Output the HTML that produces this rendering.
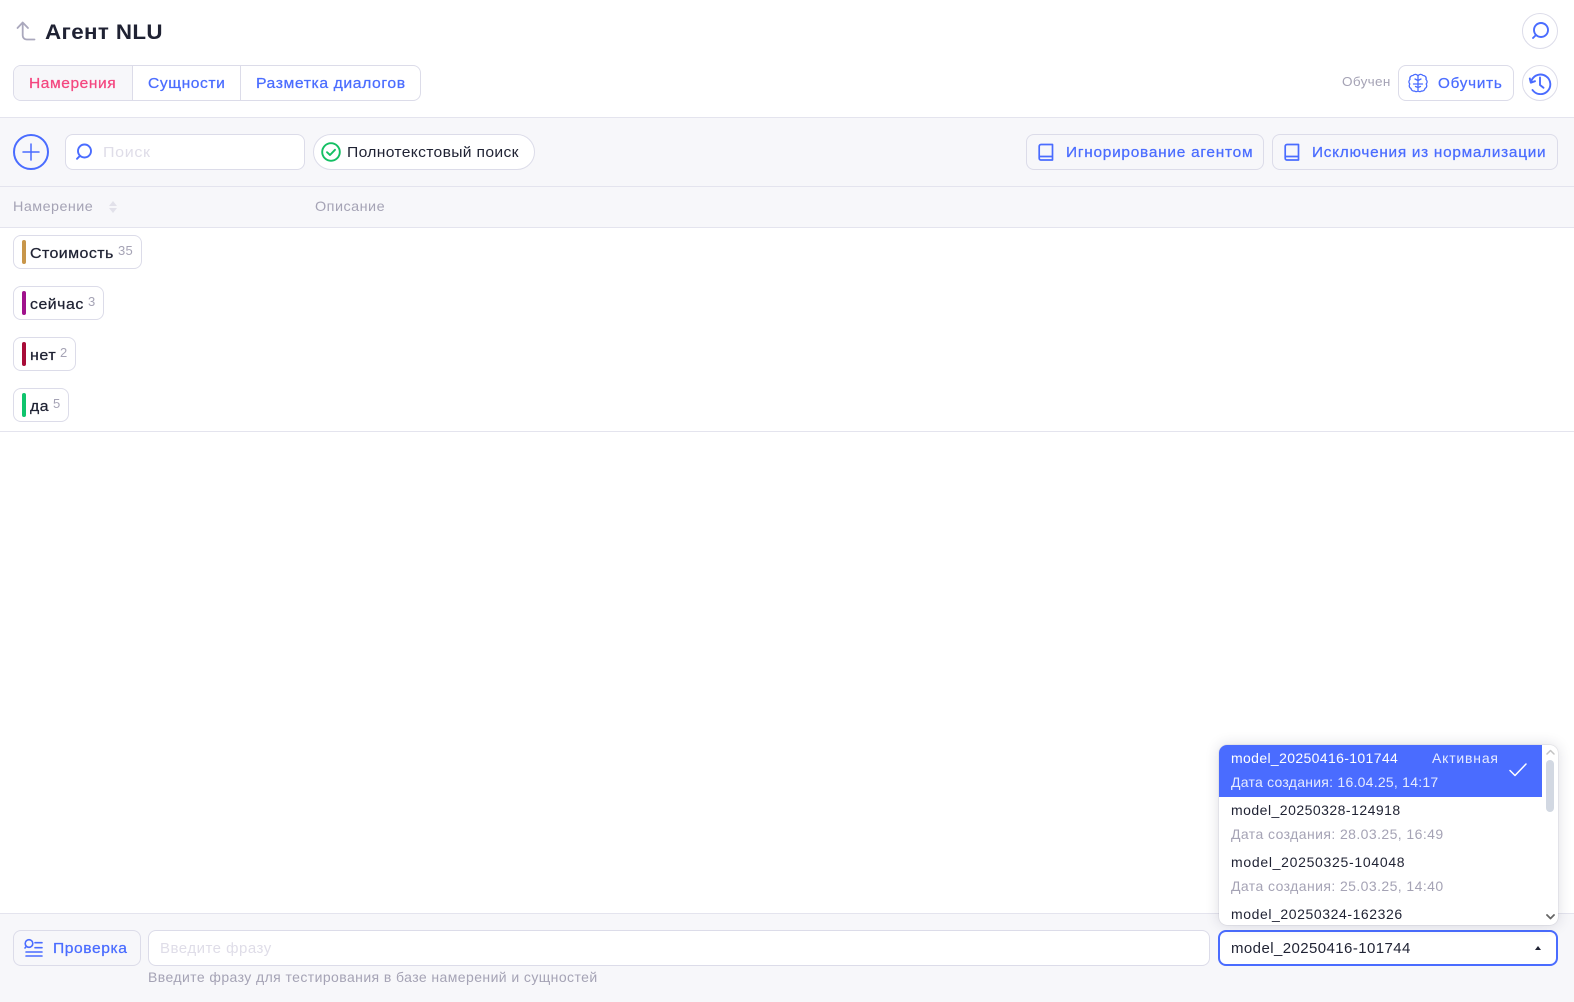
<!DOCTYPE html>
<html lang="ru"><head><meta charset="utf-8"><title>Агент NLU</title>
<style>
*{box-sizing:border-box}
html,body{margin:0;padding:0}
body{width:1574px;height:1002px;position:relative;overflow:hidden;background:#fff;font-family:"Liberation Sans",sans-serif;color:#1f2233}
.a{position:absolute}
.t{position:absolute;white-space:nowrap;line-height:20px;height:20px;transform-origin:left center}
.b{-webkit-text-stroke:.25px currentColor}
.box{position:absolute;border:1px solid #dcdce9;border-radius:8px;background:#fff}
.blue{color:#4a6cff}
svg{position:absolute;fill:none;stroke:#4a6cff;stroke-width:1.7;stroke-linecap:round;stroke-linejoin:round}
.chip{position:absolute;left:13px;height:34px;border:1px solid #dcdce9;border-radius:8px;background:#fff}
.chip i{position:absolute;left:8px;top:4px;width:4px;height:24px;border-radius:2px}
</style></head><body>

<svg style="left:15px;top:20px;stroke:#aaa8bd;stroke-width:1.8" width="24" height="24" viewBox="0 0 24 24"><path d="M2.500 8l5.200-5.500L13 8M7.700 2.500V15.500a4 4 0 0 0 4 4H19.500"/></svg>
<div class="t" style="left:45px;top:22px;font-size:21px;font-weight:700;letter-spacing:.35px;line-height:22px;height:22px;transform:scaleX(1.065)">Агент NLU</div>

<div class="a" style="left:1522px;top:13px;width:36px;height:36px;border:1px solid #dcdce9;border-radius:50%"></div>
<svg style="left:1530px;top:20px;stroke-width:1.9" width="20" height="20" viewBox="0 0 20 20"><circle cx="11" cy="10" r="7"/><path d="M6 15l-3 3"/></svg>

<div class="box" style="left:13px;top:65px;width:408px;height:36px"></div>
<div class="a" style="left:14px;top:66px;width:119px;height:34px;background:#f7f7fa;border-right:1px solid #dcdce9;border-radius:7px 0 0 7px"></div>
<div class="a" style="left:240px;top:66px;width:1px;height:34px;background:#dcdce9"></div>
<div class="t b" style="left:29px;top:74px;font-size:15px;letter-spacing:.55px;color:#f4467f;transform:scaleX(1.036)">Намерения</div>
<div class="t blue b" style="left:148px;top:74px;font-size:15px;letter-spacing:.55px;transform:scaleX(1.04)">Сущности</div>
<div class="t blue b" style="left:256px;top:74px;font-size:15px;letter-spacing:.55px;transform:scaleX(1.05)">Разметка диалогов</div>

<div class="t" style="left:1342px;top:72px;font-size:13px;letter-spacing:.3px;color:#a5a3b5;transform:scaleX(1.04)">Обучен</div>
<div class="box" style="left:1398px;top:65px;width:116px;height:36px"></div>
<svg style="left:1407px;top:72px;stroke-width:1.3" width="22" height="22" viewBox="0 0 22 22"><path d="M11 4A3 3 0 0 0 6 3.500 3 3 0 0 0 3 7.500 3 3 0 0 0 2.800 12 3 3 0 0 0 4 16.500 3 3 0 0 0 7.500 19 3 3 0 0 0 11 19 3 3 0 0 0 14.500 19 3 3 0 0 0 18 16.500 3 3 0 0 0 19.200 12 3 3 0 0 0 19 7.500 3 3 0 0 0 16 3.500 3 3 0 0 0 11 4zM11 4v15M11 8.500L8 7M11 8.500l3-1.500M11 12H6.500M11 12h4.500M11 15.500L8.500 14.500M11 15.500l2.500-1"/></svg>
<div class="t blue b" style="left:1438px;top:74px;font-size:15px;letter-spacing:.75px;transform:scaleX(1.015)">Обучить</div>
<div class="a" style="left:1522px;top:65px;width:36px;height:36px;border:1px solid #dcdce9;border-radius:50%"></div>
<svg style="left:1528px;top:71px;stroke-width:1.9" width="24" height="24" viewBox="0 0 24 24"><path d="M3.500 9.500A9.800 9.800 0 1 1 4.500 19M1.800 7.500l1 4.200 4.200-1.500M12 6.500v7.500l3.500 2.800"/></svg>

<div class="a" style="left:0;top:117px;width:1574px;height:111px;background:#f7f7fa;border-top:1px solid #e4e4ee;border-bottom:1px solid #e4e4ee"></div>
<div class="a" style="left:0;top:186px;width:1574px;height:1px;background:#e4e4ee"></div>

<div class="a" style="left:13px;top:134px;width:36px;height:36px;border:2px solid #4a6cff;border-radius:50%"></div>
<svg style="left:21px;top:142px;stroke-width:1.500" width="20" height="20" viewBox="0 0 20 20"><path d="M10 2v16M2 10h16"/></svg>
<div class="box" style="left:65px;top:134px;width:240px;height:36px"></div>
<svg style="left:74px;top:143px;stroke-width:1.9" width="20" height="20" viewBox="0 0 20 20"><circle cx="10.500" cy="8" r="6.500"/><path d="M6 12.800l-3 3"/></svg>
<div class="t" style="left:103px;top:143px;font-size:15px;letter-spacing:.6px;color:#dfdde8;transform:scaleX(1.07)">Поиск</div>
<div class="a" style="left:313px;top:134px;width:222px;height:36px;background:#fff;border:1px solid #dcdce9;border-radius:18px"></div>
<svg style="left:321px;top:142px;stroke:#14bf63;stroke-width:1.900" width="20" height="20" viewBox="0 0 20 20"><circle cx="10" cy="10" r="8.800"/><path d="M6 10.200l3 2.800 5-5.200"/></svg>
<div class="t" style="left:347px;top:143px;font-size:15px;letter-spacing:.3px;transform:scaleX(1.045)">Полнотекстовый поиск</div>

<div class="box" style="left:1026px;top:134px;width:238px;height:36px;background:#f7f7fa"></div>
<svg style="left:1036px;top:143px" width="20" height="20" viewBox="0 0 20 20"><path d="M5 1.500h11.500v15.500H5A1.800 1.800 0 0 1 3.200 15.200V3.300A1.800 1.800 0 0 1 5 1.500zM3.400 13.500H16.500"/></svg>
<div class="t blue b" style="left:1066px;top:143px;font-size:15px;letter-spacing:.72px;transform:scaleX(1.028)">Игнорирование агентом</div>
<div class="box" style="left:1272px;top:134px;width:286px;height:36px;background:#f7f7fa"></div>
<svg style="left:1282px;top:143px" width="20" height="20" viewBox="0 0 20 20"><path d="M5 1.500h11.500v15.500H5A1.800 1.800 0 0 1 3.200 15.200V3.300A1.800 1.800 0 0 1 5 1.500zM3.400 13.500H16.500"/></svg>
<div class="t blue b" style="left:1312px;top:143px;font-size:15px;letter-spacing:.72px;transform:scaleX(1.022)">Исключения из нормализации</div>

<div class="t" style="left:13px;top:196px;font-size:14px;letter-spacing:.45px;color:#a5a3b5;transform:scaleX(1.025)">Намерение</div>
<div class="a" style="left:109px;top:201px;width:0;height:0;border-left:4px solid transparent;border-right:4px solid transparent;border-bottom:5px solid #e2e1ea"></div>
<div class="a" style="left:109px;top:208px;width:0;height:0;border-left:4px solid transparent;border-right:4px solid transparent;border-top:5px solid #e2e1ea"></div>
<div class="t" style="left:315px;top:196px;font-size:14px;letter-spacing:.45px;color:#a5a3b5;transform:scaleX(1.03)">Описание</div>

<div class="chip" style="top:235px;width:129px"><i style="background:#c8964a"></i></div>
<div class="t b" style="left:30px;top:244px;font-size:15px;letter-spacing:.4px;transform:scaleX(1.064)">Стоимость</div>
<div class="t" style="left:118px;top:241px;font-size:13px;letter-spacing:.3px;color:#a5a3b5">35</div>
<div class="chip" style="top:286px;width:91px"><i style="background:#a0128c"></i></div>
<div class="t b" style="left:30px;top:295px;font-size:15px;letter-spacing:.5px;transform:scaleX(1.057)">сейчас</div>
<div class="t" style="left:88px;top:292px;font-size:13px;color:#a5a3b5">3</div>
<div class="chip" style="top:337px;width:63px"><i style="background:#a80c38"></i></div>
<div class="t b" style="left:30px;top:346px;font-size:15px;letter-spacing:.5px;transform:scaleX(1.07)">нет</div>
<div class="t" style="left:60px;top:343px;font-size:13px;color:#a5a3b5">2</div>
<div class="chip" style="top:388px;width:56px"><i style="background:#0fc46d"></i></div>
<div class="t b" style="left:30px;top:397px;font-size:15px;letter-spacing:.5px;transform:scaleX(1.05)">да</div>
<div class="t" style="left:53px;top:394px;font-size:13px;color:#a5a3b5">5</div>
<div class="a" style="left:0;top:431px;width:1574px;height:1px;background:#e4e4ee"></div>

<div class="a" style="left:0;top:913px;width:1574px;height:89px;background:#f7f7fa;border-top:1px solid #e4e4ee"></div>
<div class="box" style="left:13px;top:930px;width:128px;height:36px;background:#f7f7fa"></div>
<svg style="left:23px;top:937px;stroke-width:1.600" width="22" height="22" viewBox="0 0 22 22"><circle cx="6" cy="6.500" r="3.800"/><path d="M3.300 9.400L2 11M12 5.700h7M12 10.700h7M3 15h16M3 19h16"/></svg>
<div class="t blue b" style="left:53px;top:939px;font-size:15px;letter-spacing:.55px;transform:scaleX(1.04)">Проверка</div>
<div class="box" style="left:148px;top:930px;width:1062px;height:36px"></div>
<div class="t" style="left:160px;top:939px;font-size:15px;letter-spacing:.5px;color:#dfdde8">Введите фразу</div>
<div class="t" style="left:148px;top:967px;font-size:14px;letter-spacing:.42px;color:#a5a3b5">Введите фразу для тестирования в базе намерений и сущностей</div>

<div class="a" style="left:1218px;top:930px;width:340px;height:36px;background:#fff;border:2px solid #4a6cff;border-radius:8px"></div>
<div class="t" style="left:1231px;top:939px;font-size:15px;letter-spacing:.42px">model_20250416-101744</div>
<div class="a" style="left:1535px;top:946px;width:0;height:0;border-left:3.500px solid transparent;border-right:3.500px solid transparent;border-bottom:4px solid #1f2233"></div>

<div class="a" style="left:1219px;top:745px;width:339px;height:180px;background:#fff;border-radius:8px;overflow:hidden;box-shadow:0 0 14px rgba(40,40,70,.16),0 0 1px rgba(40,40,70,.35)">
 <div class="a" style="left:0;top:0;width:323px;height:52px;background:#4a6cff"></div>
 <div class="t" style="left:12px;top:3px;font-size:14px;letter-spacing:.36px;color:#fff">model_20250416-101744</div>
 <div class="t" style="left:213px;top:3px;font-size:14px;letter-spacing:.8px;color:#e6ebff">Активная</div>
 <div class="t" style="left:12px;top:27px;font-size:14px;letter-spacing:.25px;color:#e6ebff">Дата создания: 16.04.25, 14:17</div>
 <svg style="left:290px;top:17px;stroke:#fff;stroke-width:1.500" width="18" height="16" viewBox="0 0 18 16"><path d="M1 8.500l5 5L17 2"/></svg>
 <div class="t" style="left:12px;top:55px;font-size:14px;letter-spacing:.48px">model_20250328-124918</div>
 <div class="t" style="left:12px;top:79px;font-size:14px;letter-spacing:.42px;color:#a5a3b5">Дата создания: 28.03.25, 16:49</div>
 <div class="t" style="left:12px;top:107px;font-size:14px;letter-spacing:.7px">model_20250325-104048</div>
 <div class="t" style="left:12px;top:131px;font-size:14px;letter-spacing:.42px;color:#a5a3b5">Дата создания: 25.03.25, 14:40</div>
 <div class="t" style="left:12px;top:159px;font-size:14px;letter-spacing:.58px">model_20250324-162326</div>
 <div class="a" style="left:327px;top:15px;width:8px;height:52px;background:#d2d8e2;border-radius:4px"></div>
 <svg style="left:327px;top:4px;stroke:#c3c3c3;stroke-width:1.500" width="9" height="7" viewBox="0 0 9 7"><path d="M1 5l3.500-3.500L8 5"/></svg>
 <svg style="left:327px;top:168px;stroke:#666;stroke-width:1.800" width="9" height="7" viewBox="0 0 9 7"><path d="M1 2l3.500 3.500L8 2"/></svg>
</div>
</body></html>
